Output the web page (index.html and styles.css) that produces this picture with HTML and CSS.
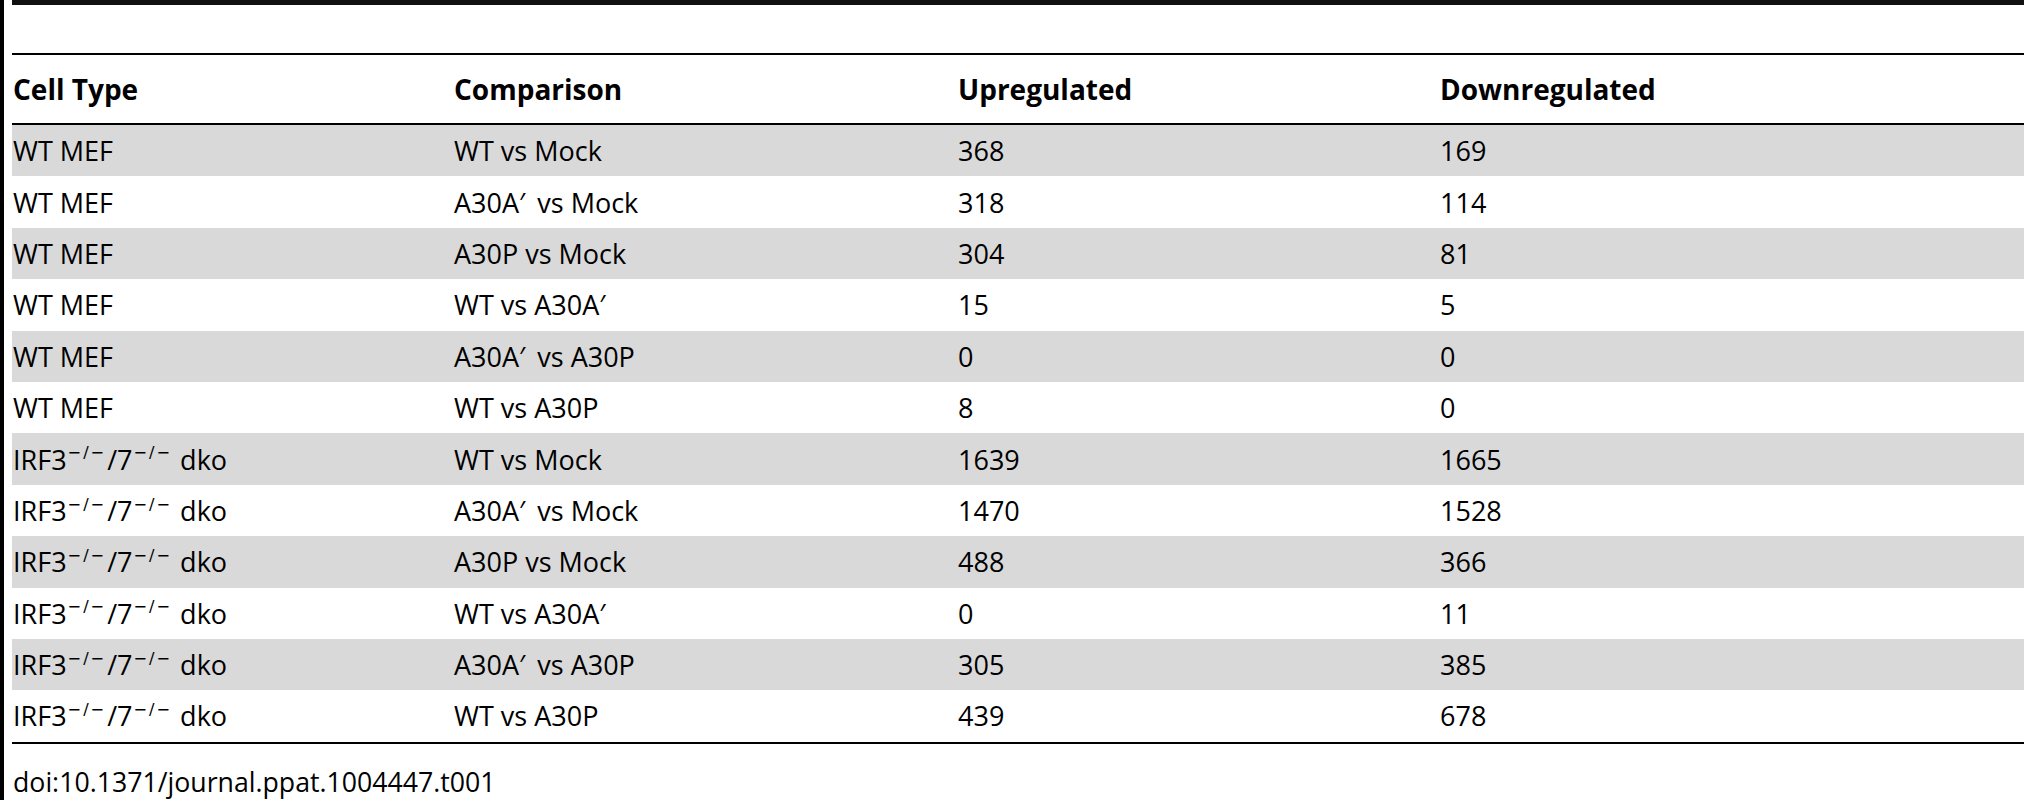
FILE: index.html
```html
<!DOCTYPE html>
<html>
<head>
<meta charset="utf-8">
<link rel="stylesheet" href="styles.css">
</head>
<body>
<div class="page">
  <div class="topbar"></div>
  <div class="table">
    <div class="row head">
      <div class="cell">Cell Type</div>
      <div class="cell">Comparison</div>
      <div class="cell">Upregulated</div>
      <div class="cell">Downregulated</div>
    </div>
    <div class="body">
      <div class="row shade"><div class="cell">WT MEF</div><div class="cell">WT vs Mock</div><div class="cell">368</div><div class="cell">169</div></div>
      <div class="row"><div class="cell">WT MEF</div><div class="cell">A30A<span class="pr">′</span> vs Mock</div><div class="cell">318</div><div class="cell">114</div></div>
      <div class="row shade"><div class="cell">WT MEF</div><div class="cell">A30P vs Mock</div><div class="cell">304</div><div class="cell">81</div></div>
      <div class="row"><div class="cell">WT MEF</div><div class="cell">WT vs A30A<span class="pr">′</span></div><div class="cell">15</div><div class="cell">5</div></div>
      <div class="row shade"><div class="cell">WT MEF</div><div class="cell">A30A<span class="pr">′</span> vs A30P</div><div class="cell">0</div><div class="cell">0</div></div>
      <div class="row"><div class="cell">WT MEF</div><div class="cell">WT vs A30P</div><div class="cell">8</div><div class="cell">0</div></div>
      <div class="row shade"><div class="cell">IRF3<sup>−/−</sup>/7<sup>−/−</sup> dko</div><div class="cell">WT vs Mock</div><div class="cell">1639</div><div class="cell">1665</div></div>
      <div class="row"><div class="cell">IRF3<sup>−/−</sup>/7<sup>−/−</sup> dko</div><div class="cell">A30A<span class="pr">′</span> vs Mock</div><div class="cell">1470</div><div class="cell">1528</div></div>
      <div class="row shade"><div class="cell">IRF3<sup>−/−</sup>/7<sup>−/−</sup> dko</div><div class="cell">A30P vs Mock</div><div class="cell">488</div><div class="cell">366</div></div>
      <div class="row"><div class="cell">IRF3<sup>−/−</sup>/7<sup>−/−</sup> dko</div><div class="cell">WT vs A30A<span class="pr">′</span></div><div class="cell">0</div><div class="cell">11</div></div>
      <div class="row shade"><div class="cell">IRF3<sup>−/−</sup>/7<sup>−/−</sup> dko</div><div class="cell">A30A<span class="pr">′</span> vs A30P</div><div class="cell">305</div><div class="cell">385</div></div>
      <div class="row"><div class="cell">IRF3<sup>−/−</sup>/7<sup>−/−</sup> dko</div><div class="cell">WT vs A30P</div><div class="cell">439</div><div class="cell">678</div></div>
    </div>
  </div>
  <div class="doi">doi:10.1371/journal.ppat.1004447.t001</div>
</div>
</body>
</html>
```
FILE: styles.css
```css
html, body {
  margin: 0;
  padding: 0;
  background: #fff;
}
body {
  font-family: "Open Sans", "Noto Sans", sans-serif;
  color: #000;
}
.page {
  box-sizing: border-box;
  width: 2024px;
  height: 800px;
  border-left: 4px solid #000;
  padding-left: 8px;
  overflow: hidden;
}
.topbar {
  height: 5px;
  background: #111;
  margin-bottom: 48px;
}
.table {
  border-top: 2px solid #000;
  border-bottom: 2px solid #000;
}
.row {
  display: grid;
  grid-template-columns: 441px 504px 482px 1fr;
  align-items: center;
  height: 51.4px;
  font-size: 27px;
}
.head {
  height: 68px;
  font-size: 28px;
  font-weight: 700;
  border-bottom: 2px solid #000;
}
.shade {
  background: #d9d9d9;
}
.cell {
  padding-left: 1px;
  white-space: nowrap;
}
.pr {
  margin-right: 5px;
}
sup {
  font-family: "DejaVu Sans", sans-serif;
  font-size: 0.6em;
  line-height: 0;
  vertical-align: 0.7em;
  letter-spacing: 2px;
  margin-left: 1px;
  margin-right: 1px;
}
.doi {
  font-size: 26.7px;
  padding-left: 1px;
  margin-top: 19px;
}
```
